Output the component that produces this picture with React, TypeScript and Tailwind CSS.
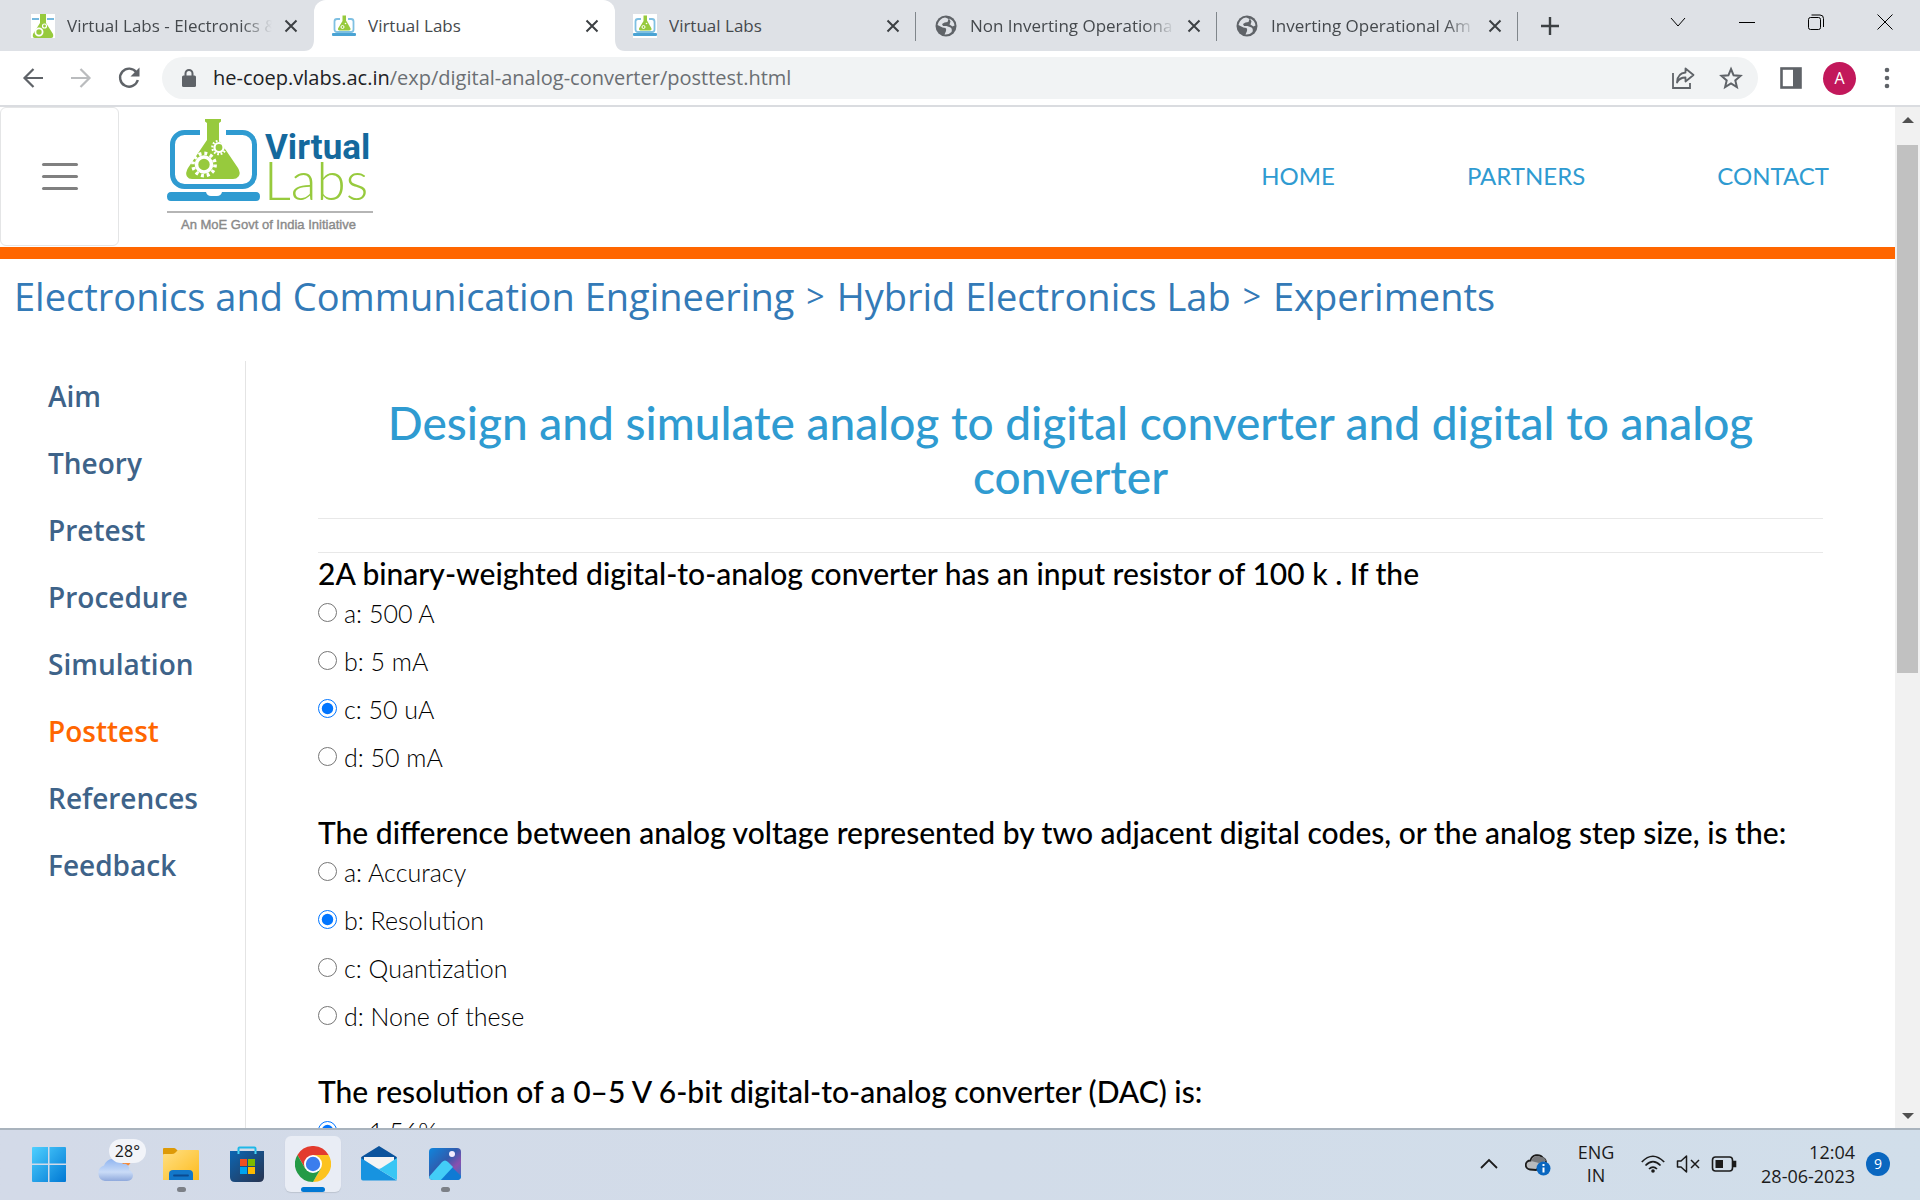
import React from "react";

const tabs = [
  { title: "Virtual Labs - Electronics &", icon: "flask", active: false },
  { title: "Virtual Labs", icon: "laptop", active: true },
  { title: "Virtual Labs", icon: "laptop", active: false },
  { title: "Non Inverting Operationa", icon: "globe", active: false },
  { title: "Inverting Operational Am", icon: "globe", active: false },
];

const sideLinks = ["Aim", "Theory", "Pretest", "Procedure", "Simulation", "Posttest", "References", "Feedback"];

const questions = [
  {
    text: "2A binary-weighted digital-to-analog converter has an input resistor of 100 k . If the",
    options: ["a: 500 A", "b: 5 mA", "c: 50 uA", "d: 50 mA"],
    chosen: 2,
  },
  {
    text: "The difference between analog voltage represented by two adjacent digital codes, or the analog step size, is the:",
    options: ["a: Accuracy", "b: Resolution", "c: Quantization", "d: None of these"],
    chosen: 1,
  },
  {
    text: "The resolution of a 0–5 V 6-bit digital-to-analog converter (DAC) is:",
    options: ["a: 1.56%"],
    chosen: 0,
  },
];

function Gear({ x, y, r, w }: { x: number; y: number; r: number; w: number }) {
  const tooth = (2 * Math.PI * (r + w)) / 24;
  return (
    <g fill="none" stroke="#fff">
      <circle cx={x} cy={y} r={r} strokeWidth={w} />
      <circle cx={x} cy={y} r={r + w} strokeWidth={w} strokeDasharray={`${tooth} ${tooth}`} />
    </g>
  );
}

function Favicon({ kind }: { kind: string }) {
  if (kind === "flask")
    return (
      <svg viewBox="0 0 24 24" className="size-6 shrink-0" aria-hidden="true">
        <rect width="24" height="24" fill="#fff" />
        <path d="M1 5h7M16 5h7" stroke="#4aa3d4" strokeWidth="1.6" />
        <path d="M9 0h6v9l7 11q1 4-2 4H4q-3 0-2-4L9 9z" fill="#97ca3d" />
        <circle cx="8" cy="18" r="3.600" fill="none" stroke="#fff" strokeWidth="1.800" />
        <circle cx="13.500" cy="12" r="2" fill="none" stroke="#fff" strokeWidth="1.200" />
      </svg>
    );
  if (kind === "laptop")
    return (
      <svg viewBox="0 0 24 24" className="size-6 shrink-0" aria-hidden="true">
        <rect width="24" height="24" fill="#fff" />
        <rect x="2.5" y="5" width="19" height="13" rx="2.5" fill="none" stroke="#7fc0e2" strokeWidth="1.8" />
        <rect x="8" y="3" width="8" height="4" fill="#fff" />
        <path d="M10.5 1.500h3.500v5l4.500 8q.5 2-1.500 2h-9.500q-2 0-1.500-2L10.500 7z" fill="#97ca3d" />
        <circle cx="10.500" cy="13" r="1.500" fill="none" stroke="#fff" />
        <circle cx="13.500" cy="9.500" r=".8" fill="#fff" />
        <rect x="0" y="19" width="24" height="3" rx="1" fill="#4aa3d4" />
      </svg>
    );
  return (
    <svg viewBox="0 0 24 24" className="size-6 shrink-0" aria-hidden="true">
      <circle cx="12" cy="12" r="10.500" fill="#5f6368" />
      <path d="M11 3.500q-6 1-7.500 7.500l5 2.500 3 .5q1 1 .5 3l-1.500 3.500q4 .5 7-2.500 1-3-1-4.500l-4-1.500h-3.500l-1-2 2.500-1.500 3-.5 1-3-2-1z" fill="#dee1e6" />
      <path d="M15 4.500q5 2 5.500 7l-2 1-3-2 1-3z" fill="#dee1e6" />
    </svg>
  );
}

function Cross({ className }: { className: string }) {
  return (
    <svg viewBox="0 0 14 14" className={className} aria-hidden="true">
      <path d="M1.500 1.500l11 11M12.500 1.500l-11 11" stroke="currentColor" strokeWidth="2" />
    </svg>
  );
}

function TabStrip() {
  return (
    <div className="flex h-[51px] shrink-0 bg-[#dee1e6] pl-[13px]">
      {tabs.map((t, i) => (
        <div
          key={i}
          className={
            "relative flex h-full w-[301px] items-center pl-[18px] pr-4 text-[#45494d] " +
            (t.active ? "rounded-t-xl bg-white" : "")
          }
        >
          {t.active && (
            <svg viewBox="0 0 321 12" className="absolute -left-[10px] bottom-0 h-3 w-[321px]" aria-hidden="true">
              <path d="M0 12q10 0 10-12v12zM321 12q-10 0-10-12v12z" fill="#fff" />
            </svg>
          )}
          <Favicon kind={t.icon} />
          <span
            className={
              "ml-3 w-[207px] overflow-hidden whitespace-nowrap text-[17px] leading-6 " +
              (t.title.length > 12 ? "[mask-image:linear-gradient(to_right,#000_85%,transparent)]" : "")
            }
          >
            {t.title}
          </span>
          <button aria-label="Close tab" className="ml-3 shrink-0 text-[#3c4043]">
            <Cross className="size-[14px]" />
          </button>
          {i > 1 && <span className="absolute right-0 top-3 h-[29px] w-px bg-[#80868b]" />}
        </div>
      ))}
      <button aria-label="New tab" className="ml-[23px] text-[#3c4043]">
        <svg viewBox="0 0 18 18" className="size-[18px]" aria-hidden="true">
          <path d="M9 0v18M0 9h18" stroke="currentColor" strokeWidth="2.400" />
        </svg>
      </button>
      <div className="ml-auto mt-[14px] flex h-4 items-center gap-[53px] pr-[27px] text-black">
        <button aria-label="Search tabs">
          <svg viewBox="0 0 16 16" className="size-4" aria-hidden="true">
            <path d="M1 4l7 8 7-8" fill="none" stroke="currentColor" />
          </svg>
        </button>
        <button aria-label="Minimize">
          <svg viewBox="0 0 16 16" className="size-4" aria-hidden="true">
            <path d="M0 8.500h16" stroke="currentColor" />
          </svg>
        </button>
        <button aria-label="Restore">
          <svg viewBox="0 0 16 16" className="size-4" aria-hidden="true">
            <rect x=".5" y="3.500" width="12" height="12" rx="2" fill="none" stroke="currentColor" />
            <path d="M3.500 1h8.500q3.500 0 3.500 3.500V13" fill="none" stroke="currentColor" />
          </svg>
        </button>
        <button aria-label="Close window">
          <svg viewBox="0 0 16 16" className="size-4" aria-hidden="true">
            <path d="M.5.5l15 15M15.500.5l-15 15" stroke="currentColor" />
          </svg>
        </button>
      </div>
    </div>
  );
}

function Toolbar() {
  return (
    <div className="flex h-[56px] shrink-0 items-center border-b-2 border-[#dadce0] bg-white pl-[21px] text-[#5f6368]">
      <button aria-label="Back">
        <svg viewBox="0 0 24 24" className="size-6" fill="none" stroke="currentColor" strokeWidth="2.200" aria-hidden="true">
          <path d="M22 12H4M12.500 3L3.500 12l9 9" />
        </svg>
      </button>
      <button aria-label="Forward" className="ml-6 text-[#babcbe]">
        <svg viewBox="0 0 24 24" className="size-6" fill="none" stroke="currentColor" strokeWidth="2.200" aria-hidden="true">
          <path d="M2 12h18M11.500 3l9 9-9 9" />
        </svg>
      </button>
      <button aria-label="Reload" className="ml-6">
        <svg viewBox="0 0 24 24" className="size-6" fill="none" stroke="currentColor" strokeWidth="2.400" aria-hidden="true">
          <path d="M19.500 6.500A9 9 0 1 0 20.800 14" />
          <path d="M22.500 1.500v9h-9z" fill="currentColor" stroke="none" />
        </svg>
      </button>
      <div className="ml-[21px] flex h-[42px] flex-1 items-center rounded-full bg-[#f1f3f4] pl-5 pr-[15px]">
        <svg viewBox="0 0 14 18" className="h-[18px] w-[14px]" aria-hidden="true">
          <rect x="0" y="6.500" width="14" height="11.500" rx="1.500" fill="currentColor" />
          <path d="M3.500 7V4.500a3.500 3.500 0 0 1 7 0V7" fill="none" stroke="currentColor" strokeWidth="2" />
        </svg>
        <span className="ml-[17px] text-[20px] leading-7 text-[#6b6f73]">
          <span className="text-[#202124]">he-coep.vlabs.ac.in</span>/exp/digital-analog-converter/posttest.html
        </span>
        <button aria-label="Share" className="ml-auto">
          <svg viewBox="0 0 24 24" className="size-6" fill="none" stroke="currentColor" strokeWidth="1.800" aria-hidden="true">
            <path d="M2 7v15h17v-5" />
            <path d="M14.500 2.500l8 6.500-8 6.500v-4q-6 0-8.500 5 .5-9.500 8.500-10z" strokeLinejoin="round" />
          </svg>
        </button>
        <button aria-label="Bookmark" className="ml-6">
          <svg viewBox="0 0 24 24" className="size-6" fill="none" stroke="currentColor" strokeWidth="2" aria-hidden="true">
            <path d="M12 3l2.600 6.300 6.900.6-5.200 4.500 1.600 6.700L12 17.500l-5.900 3.600 1.600-6.700-5.200-4.500 6.900-.6z" />
          </svg>
        </button>
      </div>
      <button aria-label="Side panel" className="ml-[22px]">
        <svg viewBox="0 0 22 22" className="size-[22px]" aria-hidden="true">
          <rect x="1.500" y="1.500" width="19" height="19" fill="none" stroke="currentColor" strokeWidth="2.600" />
          <rect x="13" y="1" width="8" height="20" fill="currentColor" />
        </svg>
      </button>
      <button className="ml-[21px] size-[33px] rounded-full bg-[#c2185b] text-[16px] text-white">A</button>
      <button aria-label="Menu" className="ml-[19px] mr-[21px]">
        <svg viewBox="0 0 24 24" className="size-6" fill="currentColor" aria-hidden="true">
          <circle cx="12" cy="4" r="2.300" />
          <circle cx="12" cy="12" r="2.300" />
          <circle cx="12" cy="20" r="2.300" />
        </svg>
      </button>
    </div>
  );
}

function Logo() {
  return (
    <svg viewBox="0 2 212 120" className="h-[120px] w-[212px]" role="img" aria-label="Virtual Labs">
      <rect x="5.500" y="18.500" width="82" height="54" rx="12" fill="none" stroke="#2f9bd1" strokeWidth="5" />
      <rect x="33" y="12" width="26" height="10" fill="#fff" />
      <path
        d="M38 5h16v2.500l-2 1.500v17l19 28q3 5 .5 8.500-2 2.500-5.500 2.500H25q-3.500 0-5-2.500-2-3.500 1-8.500l19-28V9l-2-1.500z"
        fill="#97ca3d"
      />
      <Gear x={37} y={50.500} r={7.500} w={3.600} />
      <Gear x={52} y={33.500} r={4.500} w={2.200} />
      <path d="M4 78h35q1 4 5 4h6q4 0 5-4h34q4 0 4 4.500t-4 4.500H4q-4 0-4-4.500T4 78z" fill="#2f9bd1" />
      <rect x="0" y="97" width="206" height="2" fill="#b5b5b5" />
      <text x="98" y="45" fontSize="35" fontWeight="700" fill="#14699d" fontFamily="Roboto, sans-serif">
        Virtual
      </text>
      <text x="97" y="86" fontSize="53" fontWeight="300" fill="#97ca3d" fontFamily="Lato, sans-serif">
        Labs
      </text>
      <text x="14" y="115" fontSize="13" fill="#8a8a8a" stroke="#8a8a8a" strokeWidth=".4" fontFamily="Liberation Sans, sans-serif">
        An MoE Govt of India Initiative
      </text>
    </svg>
  );
}

function SiteHeader() {
  return (
    <header className="flex h-[152px] shrink-0 items-center border-b-[12px] border-[#ff6600] pb-[2px] font-['Lato',sans-serif]">
      <button
        aria-label="Toggle navigation"
        className="flex h-[139px] w-[119px] flex-col items-center justify-center gap-[9px] rounded-md border border-[#e4e5e6]"
      >
        <span className="h-[3px] w-9 rounded-full bg-[#808080]" />
        <span className="h-[3px] w-9 rounded-full bg-[#808080]" />
        <span className="h-[3px] w-9 rounded-full bg-[#808080]" />
      </button>
      <a href="#home" className="ml-12">
        <Logo />
      </a>
      <nav className="ml-auto flex gap-[132px] pr-[66px] text-[24px] leading-8 text-[#2f9bd1]">
        <a href="#home">HOME</a>
        <a href="#partners">PARTNERS</a>
        <a href="#contact">CONTACT</a>
      </nav>
    </header>
  );
}

function Question({ index }: { index: number }) {
  const q = questions[index];
  return (
    <fieldset className="mb-[31px]">
      <legend className="h-9 whitespace-nowrap pt-0.5 text-[30px] font-medium leading-9 text-black">{q.text}</legend>
      {q.options.map((o, i) => (
        <label key={o} className="flex h-12 items-center text-[25px] font-light leading-8 text-black">
          <input
            type="radio"
            name={`question-${index}`}
            defaultChecked={i === q.chosen}
            className="mb-0.5 mr-[7px] size-[19px] accent-[#0075ff]"
          />
          {o}
        </label>
      ))}
    </fieldset>
  );
}

function Page() {
  return (
    <div className="flex min-w-0 flex-1 flex-col overflow-hidden bg-white">
      <SiteHeader />
      <nav aria-label="Breadcrumb" className="flex shrink-0 gap-3 px-[14px] pb-[14px] pt-[10px] text-[38px] leading-[54px] text-[#337ab7]">
        <a href="#department">Electronics and Communication Engineering</a>
        <span className="text-[32px]">&gt;</span>
        <a href="#lab">Hybrid Electronics Lab</a>
        <span className="text-[32px]">&gt;</span>
        <a href="#experiments">Experiments</a>
      </nav>
      <div className="mt-6 flex min-h-0 flex-1">
        <nav className="flex w-[246px] shrink-0 flex-col gap-[27px] border-r border-[#e4e4e4] pl-12 pt-[15px] text-[28px] font-semibold leading-10 text-[#3e6389]">
          {sideLinks.map((s) => (
            <a key={s} href={"#" + s.toLowerCase()} className={s === "Posttest" ? "text-[#ff6600]" : ""}>
              {s}
            </a>
          ))}
        </nav>
        <main className="min-w-0 flex-1 px-[72px] pt-[35px] font-['Lato',sans-serif]">
          <h1 className="mx-auto max-w-[1440px] text-center text-[46px] font-medium leading-[54px] text-[#2f9bd1]">
            Design and simulate analog to digital converter and digital to analog converter
          </h1>
          <hr className="mt-[14px] border-[#e8e8e8]" />
          <hr className="mt-[33px] border-[#e8e8e8]" />
          {questions.map((_, i) => (
            <Question key={i} index={i} />
          ))}
        </main>
      </div>
    </div>
  );
}

function ScrollBar() {
  return (
    <div className="flex w-[25px] shrink-0 flex-col items-center bg-[#f1f1f1]" aria-hidden="true">
      <svg viewBox="0 0 12 6" className="my-[10px] h-[6px] w-3">
        <path d="M0 6l6-6 6 6z" fill="#505050" />
      </svg>
      <div className="mt-3 h-[528px] w-[21px] bg-[#c1c1c1]" />
      <svg viewBox="0 0 12 6" className="mb-[9px] mt-auto h-[6px] w-3">
        <path d="M0 0l6 6 6-6z" fill="#505050" />
      </svg>
    </div>
  );
}

function TaskIcon({ kind }: { kind: string }) {
  switch (kind) {
    case "Start":
      return (
        <svg viewBox="0 0 36 36" className="size-9">
          <defs>
            <linearGradient id="win" x1="0" y1="0" x2="1" y2="1" gradientUnits="objectBoundingBox">
              <stop offset="0" stopColor="#4fd0ff" />
              <stop offset="1" stopColor="#0078d4" />
            </linearGradient>
          </defs>
          <path d="M2 1h15v16.500H1V2q0-1 1-1zM18.500 1H34q1 0 1 1v15.500H18.500zM1 19h16v17H2q-1 0-1-1zM18.500 19H35v16q0 1-1 1H18.500z" fill="url(#win)" />
        </svg>
      );
    case "Weather":
      return (
        <svg viewBox="0 0 36 36" className="size-9">
          <defs>
            <linearGradient id="cloud" x1="0" y1="0" x2="0" y2="1">
              <stop offset="0" stopColor="#8fb4f0" />
              <stop offset=".6" stopColor="#c9dbf7" />
              <stop offset="1" stopColor="#8fa9dc" />
            </linearGradient>
          </defs>
          <circle cx="27" cy="14" r="7" fill="#f58a3a" />
          <path d="M8 35a8 8 0 0 1-1-15.500A10.500 10.500 0 0 1 26 18q3-1 5 1.500t1 4.500q4 2 4 5.500-.5 5-6 5.500z" fill="url(#cloud)" />
        </svg>
      );
    case "File Explorer":
      return (
        <svg viewBox="0 0 36 36" className="size-9">
          <defs>
            <linearGradient id="folder" x1="0" y1="0" x2="1" y2="1">
              <stop offset="0" stopColor="#ffe084" />
              <stop offset="1" stopColor="#fdbb1e" />
            </linearGradient>
          </defs>
          <path d="M0 3q0-1 1-1h10q1 0 2 1l3 3-4 6H0z" fill="#dd9a07" />
          <path d="M0 9q0-1 1-1h8q2 0 3-1l2-2q1-1 2-1h19q1 0 1 1v29H0z" fill="url(#folder)" />
          <path d="M6 34V28q0-4 4-4h16q4 0 4 4v6z" fill="#1277c9" />
          <path d="M11 29.500h14" stroke="#0b4a8f" strokeWidth="1.800" strokeLinecap="round" />
        </svg>
      );
    case "Microsoft Store":
      return (
        <svg viewBox="0 0 36 36" className="size-9">
          <defs>
            <linearGradient id="store" x1="0" y1="0" x2="1" y2="1">
              <stop offset="0" stopColor="#0c66b3" />
              <stop offset="1" stopColor="#28334f" />
            </linearGradient>
          </defs>
          <path d="M9.500 8V2.500q0-1 1-1h15q1 0 1 1V8" fill="none" stroke="#1fb8e8" strokeWidth="2" />
          <path d="M1 5h34v26q0 5-5 5H6q-5 0-5-5z" fill="url(#store)" />
          <path d="M9.500 5v3M26.500 5v3" stroke="#45d3f5" strokeWidth="2" />
          <path d="M11 13h7v7h-7z" fill="#f25022" />
          <path d="M19 13h7v7h-7z" fill="#7fba00" />
          <path d="M11 21h7v7h-7z" fill="#00a4ef" />
          <path d="M19 21h7v7h-7z" fill="#ffb900" />
        </svg>
      );
    case "Chrome":
      return (
        <svg viewBox="0 0 36 36" className="size-9">
          <path d="M18 9h15.600A18 18 0 0 0 2.400 9l7.800 13.500z" fill="#e33b2e" />
          <path d="M25.800 22.500L18 36A18 18 0 0 0 33.600 9H18z" fill="#fcc31e" />
          <path d="M10.200 22.500L2.400 9A18 18 0 0 0 18 36l7.800-13.500z" fill="#249a46" />
          <circle cx="18" cy="18" r="9" fill="#fff" />
          <circle cx="18" cy="18" r="7.200" fill="#3b7ded" />
        </svg>
      );
    case "Mail":
      return (
        <svg viewBox="0 0 36 36" className="size-9">
          <path d="M18 0l17 10.500q1 .5 1 1.500v6H0v-6q0-1 1-1.500z" fill="#0b539c" />
          <path d="M3 11h30v11H3z" fill="#f4f4f4" />
          <path d="M0 12l18 11.500L36 34.500H2q-2 0-2-2z" fill="#1793e0" />
          <path d="M36 12L18 23.500l17.500 10.500q.5-.5.5-1.500z" fill="#38c6f4" />
        </svg>
      );
    default:
      return (
        <svg viewBox="0 0 36 36" className="size-9">
          <defs>
            <linearGradient id="photo" x1="0" y1="0" x2="1" y2="1">
              <stop offset="0" stopColor="#0f86dd" />
              <stop offset=".45" stopColor="#2f5cae" />
              <stop offset=".7" stopColor="#8a4fae" />
              <stop offset="1" stopColor="#2878c8" />
            </linearGradient>
            <clipPath id="photoClip">
              <rect x="2" y="2" width="32" height="32" rx="4" />
            </clipPath>
          </defs>
          <g clipPath="url(#photoClip)">
            <rect x="2" y="2" width="32" height="32" fill="url(#photo)" />
            <path d="M8 36l14-15q1.500-1.500 3 0l11 11v4z" fill="#0f7ad4" />
            <path d="M0 33l15-17q3-3 6 0l5 5-14 15H0z" fill="#43cdf7" />
            <circle cx="25" cy="8" r="3" fill="#f3ecff" />
          </g>
        </svg>
      );
  }
}

const taskItems = ["Start", "Weather", "File Explorer", "Microsoft Store", "Chrome", "Mail", "Photos"];

function Taskbar() {
  return (
    <div className="flex h-[72px] shrink-0 items-center border-t-2 border-[#a9b3bd] bg-linear-to-r from-[#d3dae8] to-[#d1deea] pb-0.5 pl-[21px] text-[#1b1b1b]">
      <div className="flex gap-[10px]">
        {taskItems.map((t) => (
          <button
            key={t}
            aria-label={t}
            className={
              "relative flex size-14 items-center justify-center rounded-md " +
              (t === "Chrome" ? "bg-[#e9edf5] shadow-[0_1px_1px_#bcc4d0]" : "")
            }
          >
            <TaskIcon kind={t} />
            {t === "Weather" && (
              <span className="absolute -right-[3px] top-[3px] rounded-full bg-[#f2f4f9] px-[6px] text-[16px] leading-6">
                28°
              </span>
            )}
            {t === "Chrome" && <span className="absolute bottom-0 h-[5px] w-6 rounded-full bg-[#0078d4]" />}
            {(t === "File Explorer" || t === "Photos") && (
              <span className="absolute bottom-0 h-[5px] w-[9px] rounded-full bg-[#7c8087]" />
            )}
          </button>
        ))}
      </div>
      <div className="ml-auto flex items-center pr-[30px]">
        <button aria-label="Hidden icons">
          <svg viewBox="0 0 18 18" className="size-[18px]" fill="none" stroke="currentColor" strokeWidth="1.800">
            <path d="M1 13l8-8 8 8" />
          </svg>
        </button>
        <button aria-label="OneDrive" className="ml-[27px]">
          <svg viewBox="0 0 26 24" className="h-6 w-[26px]">
            <path d="M5 17.500a4.500 4.500 0 0 1 .500-9A7 7 0 0 1 18 6q3 1 3 5L11 18z" fill="#b9bbbe" stroke="#1b1b1b" strokeWidth="1.800" />
            <path d="M6 9l8 2 7-2q-1-4-5-4-7-3-10 4z" fill="#77797c" />
            <circle cx="18.500" cy="16.500" r="7" fill="#0a67c0" />
            <path d="M18.500 15.500v5M18.500 12v2" stroke="#fff" strokeWidth="2" />
          </svg>
        </button>
        <button className="ml-6 w-[42px] text-center text-[18px] leading-[23px]">ENG IN</button>
        <button aria-label="Network, sound and battery" className="ml-6 flex items-center gap-[11px]">
          <svg viewBox="0 0 24 20" className="h-5 w-6" fill="none" stroke="currentColor" strokeWidth="1.700">
            <path d="M.8 8q11-11.500 22.400 0M4.500 11.500q7.500-7.500 15 0M8 15q4-4 8 0" />
            <circle cx="12" cy="17" r="1.800" fill="currentColor" stroke="none" />
          </svg>
          <svg viewBox="0 0 24 20" className="h-5 w-6" fill="none" stroke="currentColor" strokeWidth="1.500">
            <path d="M1.500 7H5l5.500-5v16L5 13H1.500z" strokeLinejoin="round" />
            <path d="M15 6l8 8M23 6l-8 8" />
          </svg>
          <svg viewBox="0 0 26 18" className="h-[18px] w-[26px]" fill="none" stroke="currentColor" strokeWidth="1.600">
            <rect x="1.500" y="2" width="20" height="14" rx="3" />
            <rect x="4.500" y="5" width="7.500" height="8" fill="currentColor" stroke="none" />
            <path d="M22 6.500h2.500v5H22" fill="currentColor" />
          </svg>
        </button>
        <button className="ml-[24px] text-right text-[18px] leading-6">
          12:04
          <br />
          28-06-2023
        </button>
        <button className="ml-[11px] size-6 rounded-full bg-[#0a67c0] text-[14px] leading-6 text-white">9</button>
      </div>
    </div>
  );
}

export default function App() {
  return (
    <div className="flex h-screen flex-col overflow-hidden bg-white font-['Open_Sans',sans-serif]">
      <TabStrip />
      <Toolbar />
      <div className="flex min-h-0 flex-1">
        <Page />
        <ScrollBar />
      </div>
      <Taskbar />
    </div>
  );
}
